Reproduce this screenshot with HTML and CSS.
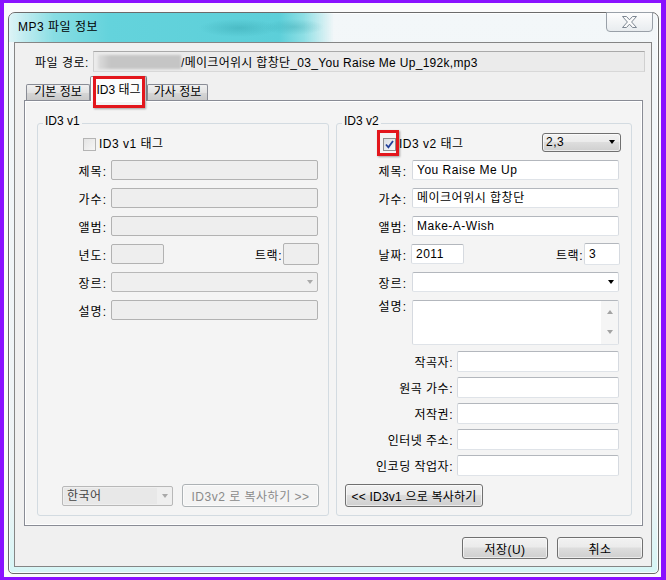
FILE: index.html
```html
<!DOCTYPE html>
<html lang="ko">

<head>
    <meta charset="utf-8">
    <title>MP3 파일 정보</title>
    <link rel="stylesheet" href="styles.css">
</head>

<body>
    <div class="screen">
        <div class="window">
            <div class="titlebar">
                <span class="title">MP3 파일 정보</span>
                <span class="close">
                    <svg width="15" height="12" viewBox="0 0 15 12">
                        <polygon points="0.5,0.5 4.5,0.5 7.5,3.8 10.5,0.5 14.5,0.5 9.6,6 14.5,11.5 10.5,11.5 7.5,8.2 4.5,11.5 0.5,11.5 5.4,6" fill="#fbfbfb" stroke="#7d8792" stroke-width="1"/>
                    </svg>
                </span>
            </div>

            <div class="client">
                <div class="pathrow">
                    <span class="pathlabel">파일 경로:</span>
                    <div class="pathbox"><span class="blurred"></span><span>/메이크어위시 합창단_03_You Raise Me Up_192k,mp3</span></div>
                </div>

                <div class="tabs">
                    <span class="tab first">기본 정보</span>
                    <span class="tab active">ID3 태그</span>
                    <span class="tab last">가사 정보</span>
                </div>

                <div class="panel">
                    <fieldset class="group v1">
                        <legend>ID3 v1</legend>
                        <div class="row checkrow"><span class="check off"></span><span>ID3 v1 태그</span></div>
                        <div class="row"><label>제목:</label><span class="field off"></span></div>
                        <div class="row"><label>가수:</label><span class="field off"></span></div>
                        <div class="row"><label>앨범:</label><span class="field off"></span></div>
                        <div class="row"><label>년도:</label><span class="field off year"></span><span class="tlabel">트랙:</span><span class="field off track"></span></div>
                        <div class="row"><label>장르:</label><span class="combo off"><span class="arrow"></span></span></div>
                        <div class="row"><label>설명:</label><span class="field off"></span></div>
                        <div class="bottomrow">
                            <span class="combo off lang"><span class="sel">한국어</span><span class="arrow"></span></span>
                            <span class="btn disabled copy1">ID3v2 로 복사하기 &gt;&gt;</span>
                        </div>
                    </fieldset>

                    <fieldset class="group v2">
                        <legend>ID3 v2</legend>
                        <div class="row checkrow">
                            <span class="check on marked">
                                <svg width="11" height="11" viewBox="0 0 11 11">
                                    <path d="M2 5.5 L4.4 8.4 L9 2" fill="none" stroke="#23409a" stroke-width="1.8"/>
                                </svg>
                            </span>
                            <span>ID3 v2 태그</span>
                            <span class="btn ver">2,3<span class="arrow"></span></span>
                        </div>
                        <div class="row"><label>제목:</label><span class="field">You Raise Me Up</span></div>
                        <div class="row"><label>가수:</label><span class="field">메이크어위시 합창단</span></div>
                        <div class="row"><label>앨범:</label><span class="field">Make-A-Wish</span></div>
                        <div class="row"><label>날짜:</label><span class="field year">2011</span><span class="tlabel">트랙:</span><span class="field track">3</span></div>
                        <div class="row"><label>장르:</label><span class="combo"><span class="arrow"></span></span></div>
                        <div class="row memorow"><label>설명:</label>
                            <span class="field memo"><span class="sb"><span class="up"></span><span class="down"></span></span></span>
                        </div>
                        <div class="row wide"><label>작곡자:</label><span class="field"></span></div>
                        <div class="row wide"><label>원곡 가수:</label><span class="field"></span></div>
                        <div class="row wide"><label>저작권:</label><span class="field"></span></div>
                        <div class="row wide"><label>인터넷 주소:</label><span class="field"></span></div>
                        <div class="row wide"><label>인코딩 작업자:</label><span class="field"></span></div>
                        <span class="btn copy2">&lt;&lt; ID3v1 으로 복사하기</span>
                    </fieldset>
                </div>

                <div class="buttons">
                    <span class="btn">저장(U)</span>
                    <span class="btn">취소</span>
                </div>
            </div>
        </div>
    </div>
</body>

</html>
```

FILE: styles.css
```css
body {
    margin: 0;
    background-color: #8a12ff;
    font-family: "Liberation Sans", "Noto Sans CJK KR", sans-serif;
    font-size: 12px;
    letter-spacing: 0.5px;
    color: #000;
}

.screen {
    margin: 3px 5px 3px 4px;
    height: 574px;
    box-sizing: border-box;
    padding: 9px 2px 0 4px;
    background-color: #fbfbfb;
}

/*Vinduet*/

.window {
    width: 651px;
    height: 562px;
    box-sizing: border-box;
    display: flex;
    flex-direction: column;
    padding: 0 6px 6px 5px;
    border: 1px solid #6b6b6b;
    border-radius: 7px 7px 5px 5px;
    background: linear-gradient(#f3f7f9, #eef3f5 85%, #d6f6f6);
    box-shadow: inset 0 0 0 1px rgba(255, 255, 255, 0.8);
}

.titlebar {
    height: 29px;
    flex: none;
    display: flex;
    align-items: flex-start;
    justify-content: space-between;
    margin: 0 -6px 0 -5px;
    padding: 0 5px 0 9px;
    border-radius: 6px 6px 0 0;
    background:
        radial-gradient(ellipse 40px 9px at 230px 15px, rgba(40, 150, 160, 0.35), transparent),
        radial-gradient(ellipse 30px 8px at 285px 14px, rgba(40, 150, 160, 0.3), transparent),
        linear-gradient(to right, rgba(200, 240, 244, 0.5) 0, #88dde3 45px, #64d3dc 100px, #5ccfd9 270px, #8fdfe5 295px, rgba(236, 245, 248, 0) 325px);
}

.title {
    padding-top: 6px;
    line-height: 16px;
}

.close {
    width: 47px;
    height: 20px;
    margin-top: -1px;
    box-sizing: border-box;
    display: flex;
    align-items: center;
    justify-content: center;
    border: 1px solid #99a0a8;
    border-radius: 0 0 4px 4px;
    background: linear-gradient(#fdfdfd, #e8ecef);
}

.client {
    flex: 1;
    display: flex;
    flex-direction: column;
    padding: 8px 8px 7px 9px;
    border: 1px solid #858585;
    background-color: #f0f0f0;
}

/*Filsti*/

.pathrow {
    display: flex;
    align-items: center;
    margin: 0 -2px 0 11px;
}

.pathlabel {
    width: 58px;
    flex: none;
    white-space: nowrap;
}

.pathbox {
    flex: 1;
    height: 21px;
    box-sizing: border-box;
    display: flex;
    align-items: center;
    padding-left: 4px;
    border: 1px solid;
    border-color: #a9a9a9 #d0d0d0 #d8d8d8 #d0d0d0;
    background-color: #ebebeb;
    white-space: nowrap;
    letter-spacing: 0.3px;
}

.blurred {
    width: 83px;
    height: 14px;
    background: linear-gradient(to right, #dcdcdc, #c5c5c5 15%, #c5c5c5);
    filter: blur(1px);
}

/*Faner*/

.tabs {
    height: 24px;
    flex: none;
    display: flex;
    align-items: flex-end;
    margin: 4px 0 0 2px;
    position: relative;
    z-index: 1;
}

.tab {
    height: 16px;
    box-sizing: border-box;
    line-height: 15px;
    text-align: center;
    border: 1px solid #898c95;
    border-bottom: none;
    border-radius: 2px 2px 0 0;
    background: linear-gradient(#f0f0f0, #e2e2e2 50%, #d6d6d6 51%, #cacaca);
    white-space: nowrap;
    letter-spacing: 0;
}

.first {
    width: 64px;
}

.last {
    width: 61px;
}

.tab.active {
    width: 57px;
    height: 25px;
    margin-bottom: -1px;
    padding-top: 5px;
    line-height: 16px;
    background: #fcfcfc;
    position: relative;
}

.tab.active::after {
    content: "";
    position: absolute;
    left: 2px;
    right: 1px;
    top: -1px;
    bottom: -7px;
    border: 3px solid #e3161c;
    box-shadow: 1px 1px 2px rgba(0, 0, 0, 0.35);
}

.panel {
    height: 426px;
    box-sizing: border-box;
    display: flex;
    gap: 7px;
    padding: 13px 9px 9px 12px;
    border: 1px solid #898c95;
    background-color: #f4f4f4;
    box-shadow: inset 0 0 0 1px #fff;
}

/*Grupper*/

.group {
    margin: 0;
    min-width: 0;
    box-sizing: border-box;
    display: flex;
    flex-direction: column;
    padding: 0 10px 8px 0;
    border: 1px solid #d3dbe1;
    border-radius: 3px;
}

.v1 {
    width: 292px;
}

.v2 {
    width: 296px;
    padding-right: 12px;
}

legend {
    margin-left: 5px;
    padding: 0 2px 4px;
    line-height: 14px;
    letter-spacing: 0;
}

.row {
    height: 20px;
    flex: none;
    display: flex;
    align-items: center;
    margin-top: 8px;
}

.row label {
    width: 69px;
    flex: none;
    margin-right: 4px;
    text-align: right;
    white-space: nowrap;
    letter-spacing: 1px;
}

.v2 .row label {
    width: 70px;
    margin-right: 5px;
}

.checkrow {
    margin-top: 0;
    padding-left: 45px;
}

.v2 .checkrow {
    padding-left: 46px;
}

.check {
    width: 13px;
    height: 13px;
    box-sizing: border-box;
    display: flex;
    align-items: center;
    justify-content: center;
    margin-right: 3px;
    position: relative;
    top: 2px;
    border: 1px solid #8e8f8f;
    background: linear-gradient(135deg, #d9dde2, #f8f9fa);
}

.check.off {
    border-color: #b4b4b4;
    background: linear-gradient(135deg, #e4e4e4, #f6f6f6);
}

.check.marked::after {
    content: "";
    position: absolute;
    left: -7px;
    top: -9px;
    width: 22px;
    height: 26px;
    box-sizing: border-box;
    border: 3px solid #e3161c;
    box-shadow: 1px 1px 2px rgba(0, 0, 0, 0.35);
}

/*Felter*/

.field {
    flex: 1;
    height: 20px;
    box-sizing: border-box;
    padding: 0 4px;
    line-height: 18px;
    border: 1px solid;
    border-color: #b3b7bd #d6dae0 #dfe3e8 #d6dae0;
    border-radius: 2px;
    background-color: #fff;
    white-space: nowrap;
}

.field.off {
    border-color: #b2b2b2;
    background-color: #eeeeee;
}

.year {
    flex: none;
    width: 53px;
}

.v2 .year {
    width: 53px;
    margin-left: -1px;
}

.tlabel {
    margin-left: auto;
    margin-right: 1px;
    white-space: nowrap;
}

.track {
    flex: none;
    width: 36px;
    height: 22px;
    line-height: 20px;
    margin-right: -1px;
}

.combo {
    flex: 1;
    height: 20px;
    box-sizing: border-box;
    display: flex;
    align-items: center;
    justify-content: flex-end;
    padding-right: 4px;
    border: 1px solid;
    border-color: #b3b7bd #d6dae0 #dfe3e8 #d6dae0;
    border-radius: 2px;
    background-color: #fff;
}

.combo.off {
    border-color: #b8b8b8;
    background-color: #efefef;
}

.arrow {
    width: 0;
    height: 0;
    border-top: 4px solid #000;
    border-left: 3.5px solid transparent;
    border-right: 3.5px solid transparent;
}

.off .arrow {
    border-top-color: #a9a9a9;
}

.memorow {
    height: 45px;
    align-items: flex-start;
}

.memorow label {
    line-height: 15px;
}

.memo {
    height: 45px;
    display: flex;
    padding: 0;
}

.sb {
    width: 17px;
    margin-left: auto;
    display: flex;
    flex-direction: column;
    align-items: center;
    justify-content: space-between;
    padding: 9px 0 10px;
    box-sizing: border-box;
    background-color: #f5f5f5;
}

.up,
.down {
    width: 0;
    height: 0;
    border-left: 3.5px solid transparent;
    border-right: 3.5px solid transparent;
}

.up {
    border-bottom: 4px solid #a3a3a3;
}

.down {
    border-top: 4px solid #a3a3a3;
}

.wide {
    height: 21px;
    margin-top: 5px;
}

.v2 .wide label {
    width: 116px;
    margin-right: 4px;
    letter-spacing: 0.5px;
}

.wide .field {
    height: 21px;
}

.memorow + .wide {
    margin-top: 6px;
}

/*Knapper*/

.btn {
    box-sizing: border-box;
    display: flex;
    align-items: center;
    justify-content: center;
    border: 1px solid #707070;
    border-radius: 3px;
    background: linear-gradient(#f2f2f2, #ebebeb 45%, #dddddd 50%, #cfcfcf);
    box-shadow: inset 0 0 0 1px rgba(255, 255, 255, 0.6);
    white-space: nowrap;
}

.btn.disabled {
    color: #8a8a8a;
    border-color: #adb2b5;
    background: #f4f4f4;
}

.ver {
    width: 79px;
    height: 19px;
    margin-left: auto;
    margin-right: -2px;
    justify-content: space-between;
    padding: 0 5px 0 3px;
}

.bottomrow {
    margin-top: auto;
    display: flex;
    align-items: center;
    gap: 9px;
    padding-left: 24px;
}

.lang {
    flex: none;
    width: 111px;
    padding: 1px 4px 1px 1px;
    justify-content: space-between;
}

.sel {
    width: 90px;
    height: 16px;
    line-height: 16px;
    padding-left: 3px;
    color: #444;
    background-color: #e8e8e8;
}

.copy1 {
    width: 137px;
    height: 23px;
    flex: none;
}

.copy2 {
    width: 138px;
    height: 23px;
    margin-top: auto;
    margin-left: 8px;
    letter-spacing: 0.2px;
}

.buttons {
    display: flex;
    justify-content: flex-end;
    gap: 9px;
    margin-top: 11px;
}

.buttons .btn {
    width: 86px;
    height: 22px;
}
```
